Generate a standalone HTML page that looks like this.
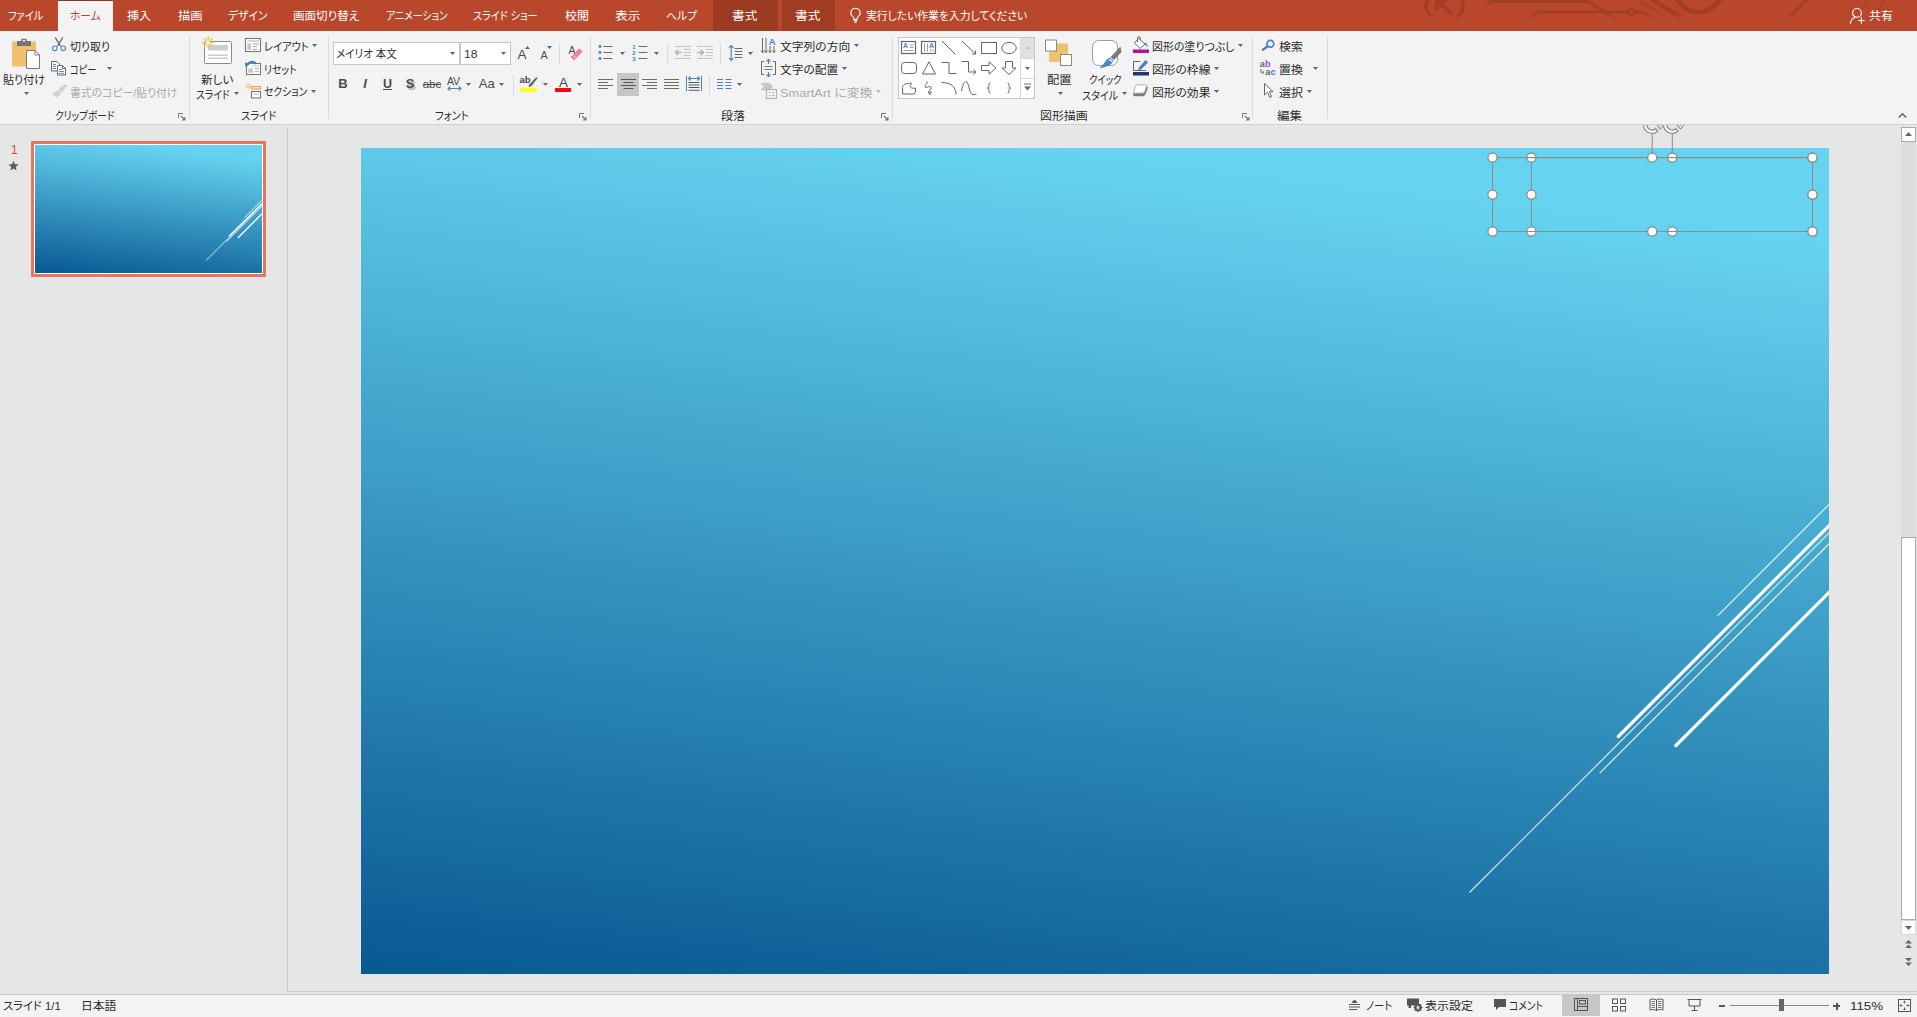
<!DOCTYPE html>
<html lang="ja"><head><meta charset="utf-8"><title>PowerPoint</title>
<style>
*{box-sizing:border-box;margin:0;padding:0}
html,body{width:1917px;height:1017px;overflow:hidden;background:#e6e6e6}
body{font-family:"Liberation Sans","Noto Sans CJK JP",sans-serif;font-size:12px;color:#2b2b2b;position:relative}
.abs{position:absolute;display:block}
svg{overflow:visible}
.t{position:absolute;white-space:pre;height:16px;line-height:16px;transform-origin:0 50%;font-feature-settings:"palt";font-kerning:normal}
.lt{position:absolute;height:18px;line-height:18px;text-align:center;white-space:pre;font-family:"Liberation Sans",sans-serif}
#tabbar{position:absolute;left:0;top:0;width:1917px;height:31px;background:#b8472b}
#ribbon{position:absolute;left:0;top:31px;width:1917px;height:94px;background:#f3f3f3;border-bottom:1px solid #d2d2d2}
#canvas{position:absolute;left:0;top:125px;width:1917px;height:869px;background:#e6e6e6}
#status{position:absolute;left:0;top:994px;width:1917px;height:23px;background:#f3f3f3;border-top:1px solid #c8c8c8}
</style></head><body>
<div id="canvas"></div>
<div class="abs" style="left:287px;top:127px;width:1px;height:865px;background:#c9c9c9"></div>
<div class="abs" style="left:288px;top:991px;width:1629px;height:1px;background:#c9c9c9"></div>
<div class="abs" style="left:31px;top:141px;width:235px;height:136px;background:#e8745a"></div>
<div class="abs" style="left:34px;top:144px;width:229px;height:130px;background:#fff"></div>
<div class="abs" style="left:35px;top:145px;width:227px;height:128px;background:linear-gradient(186.8deg,#66d4f0 0%,#66d4f0 9%,#085992 100%)"></div>
<svg class="abs" style="left:35px;top:145px" width="227" height="128" viewBox="0 0 227 128" ><path d="M209.8 72.3L227.0 55.1" stroke="#fff" stroke-opacity="0.9" stroke-width="0.90" stroke-linecap="round"/><path d="M194.4 91.0L227.0 58.4" stroke="#fff" stroke-opacity="0.95" stroke-width="1.44" stroke-linecap="round"/><path d="M171.5 115.0L227.0 59.5" stroke="#fff" stroke-opacity="0.9" stroke-width="0.90" stroke-linecap="round"/><path d="M191.6 96.6L227.0 61.2" stroke="#fff" stroke-opacity="0.9" stroke-width="0.90" stroke-linecap="round"/><path d="M203.3 92.4L227.0 68.7" stroke="#fff" stroke-opacity="0.95" stroke-width="1.44" stroke-linecap="round"/></svg>
<span class="t" id="t0" style="left:11.0px;top:141.9px;font-size:13px;color:#d04a2a;transform:scaleX(0.8985);">1</span>
<svg class="abs" style="left:8px;top:160px" width="11" height="11" viewBox="0 0 11 11" ><path d="M5.500 .8L6.900 4.300L10.600 4.500L7.700 6.900L8.700 10.500L5.500 8.500L2.300 10.500L3.300 6.900L.4 4.500L4.100 4.300Z" fill="#5a5a5a"/></svg>
<div id="slide" class="abs" style="left:361px;top:148px;width:1468px;height:826px;background:linear-gradient(186.8deg,#66d4f0 0%,#66d4f0 9%,#085992 100%)"></div>
<svg class="abs" style="left:361px;top:148px;overflow:hidden" width="1468" height="826" viewBox="0 0 1468 826" ><path d="M1357.0 467.4L1470.0 354.4" stroke="#fff" stroke-opacity="0.85" stroke-width="1.2" stroke-linecap="round"/><path d="M1257.3 588.5L1470.0 375.8" stroke="#fff" stroke-opacity="1" stroke-width="3.2" stroke-linecap="round"/><path d="M1109.0 744.0L1470.0 383.0" stroke="#fff" stroke-opacity="0.85" stroke-width="1.2" stroke-linecap="round"/><path d="M1239.0 624.8L1470.0 393.8" stroke="#fff" stroke-opacity="0.85" stroke-width="1.2" stroke-linecap="round"/><path d="M1314.9 597.5L1470.0 442.4" stroke="#fff" stroke-opacity="1" stroke-width="3.2" stroke-linecap="round"/></svg>
<svg class="abs" style="left:0;top:120px" width="1917" height="130" viewBox="0 120 1917 130"><g fill="none" stroke="#8c8c8c" stroke-width="1"><rect x="1531.4" y="157.6" width="281.0999999999999" height="73.9"/><path d="M1672.3 157.6V133"/></g><circle cx="1531.4" cy="157.6" r="4.600" fill="#fff" stroke="#8c8c8c" stroke-width="1.300"/><circle cx="1531.4" cy="194.6" r="4.600" fill="#fff" stroke="#8c8c8c" stroke-width="1.300"/><circle cx="1531.4" cy="231.5" r="4.600" fill="#fff" stroke="#8c8c8c" stroke-width="1.300"/><circle cx="1672.3" cy="157.6" r="4.600" fill="#fff" stroke="#8c8c8c" stroke-width="1.300"/><circle cx="1672.3" cy="231.5" r="4.600" fill="#fff" stroke="#8c8c8c" stroke-width="1.300"/><circle cx="1812.5" cy="157.6" r="4.600" fill="#fff" stroke="#8c8c8c" stroke-width="1.300"/><circle cx="1812.5" cy="194.6" r="4.600" fill="#fff" stroke="#8c8c8c" stroke-width="1.300"/><circle cx="1812.5" cy="231.5" r="4.600" fill="#fff" stroke="#8c8c8c" stroke-width="1.300"/><g fill="none" stroke="#8c8c8c" stroke-width="1"><rect x="1492.5" y="157.6" width="320.0" height="73.9"/><path d="M1652.2 157.6V133"/></g><path d="M1527.4 157.6H1535.4" stroke="#8c8c8c" stroke-width="1"/><path d="M1527.4 231.5H1535.4" stroke="#8c8c8c" stroke-width="1"/><path d="M1668.3 157.6H1676.3" stroke="#8c8c8c" stroke-width="1"/><path d="M1668.3 231.5H1676.3" stroke="#8c8c8c" stroke-width="1"/><circle cx="1492.5" cy="157.6" r="4.600" fill="#fff" stroke="#8c8c8c" stroke-width="1.300"/><circle cx="1492.5" cy="194.6" r="4.600" fill="#fff" stroke="#8c8c8c" stroke-width="1.300"/><circle cx="1492.5" cy="231.5" r="4.600" fill="#fff" stroke="#8c8c8c" stroke-width="1.300"/><circle cx="1652.2" cy="157.6" r="4.600" fill="#fff" stroke="#8c8c8c" stroke-width="1.300"/><circle cx="1652.2" cy="231.5" r="4.600" fill="#fff" stroke="#8c8c8c" stroke-width="1.300"/><circle cx="1812.5" cy="157.6" r="4.600" fill="#fff" stroke="#8c8c8c" stroke-width="1.300"/><circle cx="1812.5" cy="194.6" r="4.600" fill="#fff" stroke="#8c8c8c" stroke-width="1.300"/><circle cx="1812.5" cy="231.5" r="4.600" fill="#fff" stroke="#8c8c8c" stroke-width="1.300"/><path d="M1643.40 121V124.5A8.8 8.8 0 0 0 1657.86 131.24L1655.74 128.71A5.5 5.5 0 0 1 1646.70 124.5V121Z" fill="#fff" stroke="#8c8c8c" stroke-width="1.200"/><path d="M1656.40 121V124.300L1660.40 128.800L1664.40 124.300V121L1660.40 125.500Z" fill="#fff" stroke="#8c8c8c" stroke-width="1.100"/><path d="M1663.50 121V124.5A8.8 8.8 0 0 0 1677.96 131.24L1675.84 128.71A5.5 5.5 0 0 1 1666.80 124.5V121Z" fill="#fff" stroke="#8c8c8c" stroke-width="1.200"/><path d="M1676.50 121V124.300L1680.50 128.800L1684.50 124.300V121L1680.50 125.500Z" fill="#fff" stroke="#8c8c8c" stroke-width="1.100"/></svg>
<div class="abs" style="left:1901px;top:127px;width:15px;height:808px;background:#dcdcdc"></div>
<div class="abs" style="left:1901px;top:127px;width:15px;height:15px;background:#fff;border:1px solid #ababab"></div>
<svg class="abs" style="left:1905px;top:132px" width="7" height="4" viewBox="0 0 7 4" ><path d="M0 4L3.500 0L7 4Z" fill="#666"/></svg>
<div class="abs" style="left:1901px;top:537px;width:15px;height:383px;background:#fff;border:1px solid #ababab"></div>
<div class="abs" style="left:1901px;top:920px;width:15px;height:15px;background:#fff;border:1px solid #d6d6d6"></div>
<svg class="abs" style="left:1905px;top:926px" width="7" height="4" viewBox="0 0 7 4" ><path d="M0 0H7L3.500 4Z" fill="#666"/></svg>
<svg class="abs" style="left:1905px;top:940px" width="7" height="8" viewBox="0 0 7 8" ><path d="M0 3.500L3.500 0L7 3.500ZM0 8L3.500 4.500L7 8Z" fill="#666"/></svg>
<svg class="abs" style="left:1905px;top:958px" width="7" height="8" viewBox="0 0 7 8" ><path d="M0 0H7L3.500 3.500ZM0 4.500H7L3.500 8Z" fill="#666"/></svg>
<div id="status"></div>
<span class="t" id="t1" style="left:3.3px;top:998.2px;font-size:11.5px;color:#2b2b2b;transform:scaleX(0.9827);">スライド 1/1</span>
<span class="t" id="t2" style="left:80.5px;top:998.2px;font-size:11.5px;color:#2b2b2b;transform:scaleX(1.0261);">日本語</span>
<svg class="abs" style="left:1348px;top:999px" width="13" height="12" viewBox="0 0 13 12" ><path d="M6.500 1L9 3.500H4ZM1 5.500H12M1 8H12M1 10.500H9" fill="#555" stroke="#555" stroke-width="1"/></svg>
<span class="t" id="t3" style="left:1365.5px;top:998.2px;font-size:11.5px;color:#2b2b2b;transform:scaleX(0.8962);">ノート</span>
<svg class="abs" style="left:1406px;top:997px" width="17" height="15" viewBox="0 0 17 15" ><path d="M1 1.500H13V7H9.500V8.500H5V11H2.500V8.500H1Z" fill="#555"/><circle cx="12" cy="10.500" r="3" fill="none" stroke="#555" stroke-width="1.600"/><path d="M12 6V15M7.500 10.500H16.500M8.800 7.300L15.200 13.700M15.200 7.300L8.800 13.700" stroke="#555" stroke-width="1.100"/><circle cx="12" cy="10.500" r="1.300" fill="#f3f3f3"/></svg>
<span class="t" id="t4" style="left:1425.0px;top:998.2px;font-size:11.5px;color:#2b2b2b;transform:scaleX(1.0413);">表示設定</span>
<svg class="abs" style="left:1493px;top:998px" width="14" height="13" viewBox="0 0 14 13" ><path d="M1 1H13V9H6L3 12V9H1Z" fill="#555"/></svg>
<span class="t" id="t5" style="left:1509.2px;top:998.2px;font-size:11.5px;color:#2b2b2b;transform:scaleX(0.8515);">コメント</span>
<div class="abs" style="left:1562px;top:995px;width:38px;height:21px;background:#c6c6c6"></div>
<svg class="abs" style="left:1574px;top:998px" width="15" height="14" viewBox="0 0 15 14" ><rect x=".5" y=".5" width="13" height="12" fill="none" stroke="#555"/><path d="M3.500 .5V12.500M3.500 8.500H13.500" stroke="#555"/><rect x="5.500" y="2.500" width="6" height="3.500" fill="none" stroke="#555"/></svg>
<svg class="abs" style="left:1612px;top:998px" width="15" height="14" viewBox="0 0 15 14" ><g fill="none" stroke="#555"><rect x=".5" y="1" width="5" height="4.500"/><rect x="8.500" y="1" width="5" height="4.500"/><rect x=".5" y="8.500" width="5" height="4.500"/><rect x="8.500" y="8.500" width="5" height="4.500"/></g></svg>
<svg class="abs" style="left:1649px;top:998px" width="15" height="14" viewBox="0 0 15 14" ><path d="M7.500 2V13M7.500 2C5.500 .8 3 .8 1 1.500V12C3 11.300 5.500 11.300 7.500 12.500C9.500 11.300 12 11.300 14 12V1.500C12 .8 9.500 .8 7.500 2Z" fill="none" stroke="#555"/><path d="M2.500 3.500H6M2.500 5.500H6M2.500 7.500H6M2.500 9.500H6M9 3.500H12.500M9 5.500H12.500M9 7.500H12.500M9 9.500H12.500" stroke="#555" stroke-width=".8"/></svg>
<svg class="abs" style="left:1687px;top:998px" width="15" height="14" viewBox="0 0 15 14" ><path d="M.5 1.500H14.500M2 1.500V8H13V1.500M7.500 8V12M4.500 12.500H10.500" fill="none" stroke="#555"/></svg>
<div class="abs" style="left:1719px;top:1005px;width:6px;height:2px;background:#555"></div>
<div class="abs" style="left:1730px;top:1005px;width:99px;height:1px;background:#8a8a8a"></div>
<div class="abs" style="left:1779px;top:999px;width:5px;height:12px;background:#666"></div>
<div class="abs" style="left:1833px;top:1005px;width:7px;height:2px;background:#555"></div>
<div class="abs" style="left:1835.500px;top:1002.500px;width:2px;height:7px;background:#555"></div>
<span class="t" id="t6" style="left:1850.0px;top:998.2px;font-size:11.5px;color:#2b2b2b;transform:scaleX(1.1589);">115%</span>
<svg class="abs" style="left:1898px;top:999px" width="13" height="13" viewBox="0 0 13 13" ><rect x=".5" y=".5" width="12" height="12" fill="none" stroke="#555"/><path d="M6.500 2V4.500M6.500 11V8.500M2 6.500H4.500M11 6.500H8.500M5.300 3.200L6.500 2L7.700 3.200M5.300 9.800L6.500 11L7.700 9.800M3.200 5.300L2 6.500L3.200 7.700M9.800 5.300L11 6.500L9.800 7.700" fill="none" stroke="#555" stroke-width=".9"/></svg>
<div id="ribbon"></div>
<svg class="abs" style="left:11px;top:37px" width="30" height="33" viewBox="0 0 30 33" >
<rect x="1" y="4.5" width="24" height="25" fill="#efc16f"/>
<path d="M6 4h4.2v-1.2a1 1 0 0 1 1-1h3.600a1 1 0 0 1 1 1V4H20v5H6z" fill="#737373"/>
<rect x="11.6" y="2.9" width="2.8" height="1.6" fill="#f3f3f3"/>
<path d="M15.5 13.5h8.500l4.500 4.500v13.500h-13z" fill="#fff" stroke="#7a7a7a" stroke-width="1"/>
<path d="M24 13.500v4.500h4.500" fill="none" stroke="#7a7a7a" stroke-width="1"/></svg>
<span class="t" id="t22" style="left:2.5px;top:72.4px;font-size:11.5px;color:#2b2b2b;transform:scaleX(0.9590);">貼り付け</span>
<svg class="abs" style="left:24.0px;top:92.0px" width="5" height="3" viewBox="0 0 5 3"><path d="M0 0H5L2.5 3Z" fill="#666"/></svg>
<svg class="abs" style="left:51px;top:37px" width="16" height="15" viewBox="0 0 16 15" >
<path d="M4.200 .5L9.600 9.200M11.800 .5L6.400 9.200" stroke="#6b6b6b" stroke-width="1.4" fill="none"/>
<circle cx="3.800" cy="11.300" r="2.300" fill="none" stroke="#4a86d0" stroke-width="1.1"/>
<circle cx="12.200" cy="11.300" r="2.300" fill="none" stroke="#4a86d0" stroke-width="1.1"/></svg>
<span class="t" id="t23" style="left:69.9px;top:39.2px;font-size:11.5px;color:#2b2b2b;transform:scaleX(0.9516);">切り取り</span>
<svg class="abs" style="left:50px;top:60px" width="17" height="16" viewBox="0 0 17 16" >
<path d="M1.500 1.500h5.500l2.500 2.500v7h-8z" fill="#fff" stroke="#6b6b6b"/>
<path d="M3 4.500h3M3 6.500h3M3 8.500h3" stroke="#4a80bd" stroke-width=".9"/>
<path d="M7.500 5.500h5l3 3v6.500h-8z" fill="#fff" stroke="#6b6b6b"/>
<path d="M12.500 5.500v3h3" fill="none" stroke="#6b6b6b"/>
<path d="M9 9.500h3M9 11.500h5M9 13.300h5" stroke="#4a80bd" stroke-width=".9"/></svg>
<span class="t" id="t24" style="left:69.9px;top:61.5px;font-size:11.5px;color:#2b2b2b;transform:scaleX(0.7947);">コピー</span>
<svg class="abs" style="left:106.9px;top:66.8px" width="5" height="3" viewBox="0 0 5 3"><path d="M0 0H5L2.5 3Z" fill="#666"/></svg>
<svg class="abs" style="left:52px;top:84px" width="16" height="14" viewBox="0 0 16 14" >
<path d="M10.500 1.500l3 3-4.500 4.500-3-3z" fill="#d0d0d0"/>
<path d="M13 .5l2 2-1.300 1.300-2-2z" fill="#c4c4c4"/>
<path d="M5.500 6.500l3.500 3.500-4.500 3.500-4-3.500z" fill="#cfcfcf"/></svg>
<span class="t" id="t25" style="left:69.9px;top:85.0px;font-size:11.5px;color:#ababab;transform:scaleX(0.9427);">書式のコピー/貼り付け</span>
<span class="t" id="t26" style="left:55.0px;top:108.1px;font-size:11.5px;color:#2b2b2b;transform:scaleX(0.8390);">クリップボード</span>
<svg class="abs" style="left:178px;top:113px" width="8" height="8" viewBox="0 0 8 8" ><path d="M.5 5V.5H5" fill="none" stroke="#777" stroke-width="1"/><path d="M3 3L6 6" fill="none" stroke="#777" stroke-width="1.200"/><path d="M7.500 3.500V7.500H3.500Z" fill="#777"/></svg>
<div class="abs" style="left:189px;top:36px;width:1px;height:83px;background:#dcdcdc"></div>
<svg class="abs" style="left:200px;top:35px" width="34" height="30" viewBox="0 0 34 30" >
<rect x="4.500" y="6.500" width="27" height="22" rx="1" fill="#fff" stroke="#8c8c8c"/>
<rect x="8" y="10" width="20" height="5.500" fill="#cfcfcf"/>
<path d="M8 20.200h20M8 23.200h20" stroke="#b5b5b5" stroke-width="1"/>
<g stroke="#e6c45c" stroke-width="1.500"><path d="M8.200 1.500v12M2.200 7.500h12M4 3.300l8.400 8.400M12.400 3.300L4 11.700"/></g>
<circle cx="8.200" cy="7.500" r="2.200" fill="#fbf0c8"/></svg>
<span class="t" id="t27" style="left:201.2px;top:72.3px;font-size:11.5px;color:#2b2b2b;transform:scaleX(1.0069);">新しい</span>
<span class="t" id="t28" style="left:195.5px;top:86.9px;font-size:11.5px;color:#2b2b2b;transform:scaleX(0.8550);">スライド</span>
<svg class="abs" style="left:234.2px;top:92.2px" width="5" height="3" viewBox="0 0 5 3"><path d="M0 0H5L2.5 3Z" fill="#666"/></svg>
<svg class="abs" style="left:244px;top:37px" width="18" height="16" viewBox="0 0 18 16" >
<rect x="1.500" y="1.500" width="15" height="13" fill="#fff" stroke="#7a7a7a" stroke-width="1.100"/>
<rect x="3.300" y="3.100" width="11.700" height="1.700" fill="#d2d2d2"/>
<rect x="3.300" y="6.400" width="3.800" height="6.500" fill="#c8c8c8"/>
<path d="M9 6.900H15M9 9.600H13M9 12.500H13" stroke="#9a9a9a" stroke-width=".9"/></svg>
<span class="t" id="t29" style="left:263.8px;top:38.8px;font-size:11.5px;color:#2b2b2b;transform:scaleX(0.8907);">レイアウト</span>
<svg class="abs" style="left:312.2px;top:43.9px" width="5" height="3" viewBox="0 0 5 3"><path d="M0 0H5L2.5 3Z" fill="#666"/></svg>
<svg class="abs" style="left:244px;top:60px" width="18" height="16" viewBox="0 0 18 16" >
<rect x="2.500" y="3.500" width="14" height="11" fill="#fff" stroke="#7a7a7a" stroke-width="1.100"/>
<rect x="7.500" y="5.400" width="7.500" height="1.400" fill="#d8d8d8"/>
<rect x="4.300" y="8.500" width="4.500" height="4.200" fill="#c4c4c4"/>
<path d="M10.500 8.700H15M10.500 11.400H15" stroke="#a5a5a5" stroke-width=".9"/>
<path d="M12 4.200C11 1.400 6.500 .6 3 4.600" fill="none" stroke="#3e7fc1" stroke-width="2"/>
<path d="M.8 2.300L5.600 4.300L1.600 7.300Z" fill="#3e7fc1"/></svg>
<span class="t" id="t30" style="left:263.8px;top:61.8px;font-size:11.5px;color:#2b2b2b;transform:scaleX(0.8542);">リセット</span>
<svg class="abs" style="left:244px;top:82px" width="18" height="17" viewBox="0 0 18 17" >
<g stroke="#f2b25a" stroke-width=".9"><path d="M4.300 1.300v6M1.300 4.300h6M2.200 2.200l4.200 4.200M6.400 2.200l-4.200 4.200"/></g>
<circle cx="4.300" cy="4.300" r="1.100" fill="#fdeccc"/>
<rect x="7.500" y="4.500" width="9" height="2.500" fill="#fde6c4" stroke="#eba24a"/>
<rect x="7.500" y="9.500" width="9" height="6.500" fill="#fff" stroke="#7a7a7a" stroke-width="1.100"/>
<rect x="9.300" y="11.500" width="5.500" height="1.500" fill="#c9c9c9"/></svg>
<span class="t" id="t31" style="left:263.8px;top:84.4px;font-size:11.5px;color:#2b2b2b;transform:scaleX(0.8565);">セクション</span>
<svg class="abs" style="left:311.2px;top:89.9px" width="5" height="3" viewBox="0 0 5 3"><path d="M0 0H5L2.5 3Z" fill="#666"/></svg>
<span class="t" id="t32" style="left:241.3px;top:108.1px;font-size:11.5px;color:#2b2b2b;transform:scaleX(0.8904);">スライド</span>
<div class="abs" style="left:328px;top:36px;width:1px;height:83px;background:#dcdcdc"></div>
<div class="abs" style="left:333px;top:42px;width:127px;height:23px;background:#fff;border:1px solid #c6c6c6"></div>
<div class="abs" style="left:460px;top:42px;width:51px;height:23px;background:#fff;border:1px solid #c6c6c6"></div>
<span class="t" id="t33" style="left:336.1px;top:46.4px;font-size:11.5px;color:#333;transform:scaleX(0.9173);">メイリオ 本文</span>
<svg class="abs" style="left:449.9px;top:52.1px" width="5" height="3" viewBox="0 0 5 3"><path d="M0 0H5L2.5 3Z" fill="#666"/></svg>
<span class="t" id="t34" style="left:463.7px;top:46.4px;font-size:11.5px;color:#333;transform:scaleX(1.0549);">18</span>
<svg class="abs" style="left:500.9px;top:52.1px" width="5" height="3" viewBox="0 0 5 3"><path d="M0 0H5L2.5 3Z" fill="#666"/></svg>
<span class="lt" style="left:507px;top:45.7px;width:30px;font-size:13.5px;color:#4a4a4a;">A</span>
<svg class="abs" style="left:525px;top:46px" width="5" height="3" viewBox="0 0 5 3" ><path d="M0 3L2.500 0L5 3Z" fill="#4a6a94"/></svg>
<span class="lt" style="left:529px;top:45.95px;width:30px;font-size:10.8px;color:#4a4a4a;">A</span>
<svg class="abs" style="left:547px;top:46px" width="5" height="3" viewBox="0 0 5 3" ><path d="M0 0H5L2.500 3Z" fill="#4a6a94"/></svg>
<div class="abs" style="left:559px;top:43px;width:1px;height:21px;background:#dcdcdc"></div>
<span class="lt" style="left:557px;top:40.75px;width:30px;font-size:10.5px;color:#4a4a4a;">A</span>
<svg class="abs" style="left:570px;top:47px" width="14" height="14" viewBox="0 0 14 14" ><path d="M9.200 1.200L12.700 4.500L6.200 11.200L2.600 7.800Z" fill="#f0819b"/><path d="M2.200 8.300L5.800 11.700L4.300 13.200L.5 9.800Z" fill="#e8728e"/></svg>
<span class="lt" style="left:328px;top:75px;width:30px;font-size:13px;color:#4a4a4a;font-weight:bold">B</span>
<span class="lt" style="left:350px;top:75px;width:30px;font-size:13px;color:#4a4a4a;font-style:italic;font-weight:bold">I</span>
<span class="lt" style="left:372.5px;top:74.7px;width:30px;font-size:12.5px;color:#4a4a4a;text-decoration:underline;font-weight:bold">U</span>
<span class="lt" style="left:395px;top:75px;width:30px;font-size:13px;color:#4a4a4a;font-weight:bold;text-shadow:1.500px 1.500px 1px #aaa">S</span>
<span class="lt" style="left:417px;top:74.5px;width:30px;font-size:11.5px;color:#4a4a4a;text-decoration:line-through">abc</span>
<span class="lt" style="left:438.5px;top:72.2px;width:30px;font-size:10.5px;color:#4a4a4a;">AV</span>
<svg class="abs" style="left:447px;top:86px" width="15" height="5" viewBox="0 0 15 5" ><path d="M1 2.500H14M3.300 .3L1 2.500L3.300 4.700M11.700 .3L14 2.500L11.700 4.700" fill="none" stroke="#4a80bd" stroke-width="1.100"/></svg>
<svg class="abs" style="left:466.0px;top:82.8px" width="5" height="3" viewBox="0 0 5 3"><path d="M0 0H5L2.5 3Z" fill="#666"/></svg>
<span class="lt" style="left:471.7px;top:75.1px;width:30px;font-size:13px;color:#4a4a4a;">Aa</span>
<svg class="abs" style="left:499.1px;top:82.8px" width="5" height="3" viewBox="0 0 5 3"><path d="M0 0H5L2.5 3Z" fill="#666"/></svg>
<div class="abs" style="left:513px;top:75px;width:1px;height:20px;background:#dcdcdc"></div>
<span class="lt" style="left:510px;top:71.3px;width:30px;font-size:9.5px;color:#4a4a4a;font-weight:bold">ab</span>
<svg class="abs" style="left:526px;top:77px" width="12" height="10" viewBox="0 0 12 10" ><path d="M10.800 .8L4.500 7.500L3 9.200L5 8.200Z" stroke="#666" stroke-width="1.800" fill="none"/></svg>
<div class="abs" style="left:520px;top:88px;width:17px;height:4px;background:#fdfd1e"></div>
<svg class="abs" style="left:543.0px;top:82.8px" width="5" height="3" viewBox="0 0 5 3"><path d="M0 0H5L2.5 3Z" fill="#666"/></svg>
<span class="lt" style="left:548.6px;top:74.2px;width:30px;font-size:13.5px;color:#4a4a4a;">A</span>
<div class="abs" style="left:555px;top:88px;width:16px;height:4px;background:#f20d0d"></div>
<svg class="abs" style="left:577.0px;top:82.8px" width="5" height="3" viewBox="0 0 5 3"><path d="M0 0H5L2.5 3Z" fill="#666"/></svg>
<span class="t" id="t35" style="left:434.7px;top:108.1px;font-size:11.5px;color:#2b2b2b;transform:scaleX(0.8976);">フォント</span>
<svg class="abs" style="left:579px;top:113px" width="8" height="8" viewBox="0 0 8 8" ><path d="M.5 5V.5H5" fill="none" stroke="#777" stroke-width="1"/><path d="M3 3L6 6" fill="none" stroke="#777" stroke-width="1.200"/><path d="M7.500 3.500V7.500H3.500Z" fill="#777"/></svg>
<div class="abs" style="left:590px;top:36px;width:1px;height:83px;background:#dcdcdc"></div>
<svg class="abs" style="left:598px;top:44px" width="16" height="17" viewBox="0 0 16 17" >
<g fill="#4a80bd"><circle cx="2" cy="2.500" r="1.400"/><circle cx="2" cy="8.500" r="1.400"/><circle cx="2" cy="14.500" r="1.400"/></g>
<path d="M5.500 2.500H14.500M5.500 8.500H14.500M5.500 14.500H14.500" stroke="#6b6b6b" stroke-width="1"/></svg>
<svg class="abs" style="left:620.0px;top:51.9px" width="5" height="3" viewBox="0 0 5 3"><path d="M0 0H5L2.5 3Z" fill="#666"/></svg>
<svg class="abs" style="left:632px;top:44px" width="17" height="17" viewBox="0 0 17 17" >
<g fill="#4a80bd" font-family="Liberation Sans,sans-serif" font-size="6" font-weight="bold"><text x=".3" y="4.700">1</text><text x=".3" y="10.700">2</text><text x=".3" y="16.700">3</text></g>
<path d="M6.500 2.500H15.500M6.500 8.500H15.500M6.500 14.500H15.500" stroke="#6b6b6b" stroke-width="1"/></svg>
<svg class="abs" style="left:654.0px;top:51.9px" width="5" height="3" viewBox="0 0 5 3"><path d="M0 0H5L2.5 3Z" fill="#666"/></svg>
<div class="abs" style="left:667px;top:43px;width:1px;height:21px;background:#dcdcdc"></div>
<svg class="abs" style="left:674px;top:45px" width="18" height="15" viewBox="0 0 18 15" >
<path d="M1 1.500H17M9.500 4.500H17M9.500 7.500H17M9.500 10.500H17M1 13.500H17" stroke="#c4c4c4" stroke-width="1"/>
<path d="M7.500 7.500H2M4.300 4.800L1.600 7.500L4.300 10.200" fill="none" stroke="#b2b2b2" stroke-width="1.600"/></svg>
<svg class="abs" style="left:696px;top:45px" width="18" height="15" viewBox="0 0 18 15" >
<path d="M1 1.500H17M9.500 4.500H17M9.500 7.500H17M9.500 10.500H17M1 13.500H17" stroke="#c4c4c4" stroke-width="1"/>
<path d="M1.500 7.500H7M4.700 4.800L7.400 7.500L4.700 10.200" fill="none" stroke="#b2b2b2" stroke-width="1.600"/></svg>
<div class="abs" style="left:720px;top:43px;width:1px;height:21px;background:#dcdcdc"></div>
<svg class="abs" style="left:727px;top:44px" width="18" height="18" viewBox="0 0 18 18" >
<path d="M4.200 1.500V16.500M2 3.900L4.200 1.600L6.400 3.900M2 14.100L4.200 16.400L6.400 14.100" fill="none" stroke="#4a80bd" stroke-width="1.100"/>
<path d="M7.700 4.500H15.300M7.700 7.500H15.300M7.700 10.500H15.300M7.700 13.500H15.300" stroke="#6b6b6b" stroke-width="1"/></svg>
<svg class="abs" style="left:748.1px;top:51.9px" width="5" height="3" viewBox="0 0 5 3"><path d="M0 0H5L2.5 3Z" fill="#666"/></svg>
<svg class="abs" style="left:598px;top:78px" width="16" height="12" viewBox="0 0 16 12" ><path d="M0 1.5H15" stroke="#6b6b6b" stroke-width="1"/><path d="M0 4.5H10" stroke="#6b6b6b" stroke-width="1"/><path d="M0 7.5H15" stroke="#6b6b6b" stroke-width="1"/><path d="M0 10.5H10" stroke="#6b6b6b" stroke-width="1"/></svg>
<div class="abs" style="left:617px;top:73px;width:22px;height:23px;background:#c6c6c6"></div>
<svg class="abs" style="left:621px;top:78px" width="16" height="12" viewBox="0 0 16 12" ><path d="M0 1.5H15" stroke="#555" stroke-width="1"/><path d="M2.5 4.5H12.5" stroke="#555" stroke-width="1"/><path d="M0 7.5H15" stroke="#555" stroke-width="1"/><path d="M2.5 10.5H12.5" stroke="#555" stroke-width="1"/></svg>
<svg class="abs" style="left:642px;top:78px" width="16" height="12" viewBox="0 0 16 12" ><path d="M0 1.5H15" stroke="#6b6b6b" stroke-width="1"/><path d="M5 4.5H15" stroke="#6b6b6b" stroke-width="1"/><path d="M0 7.5H15" stroke="#6b6b6b" stroke-width="1"/><path d="M5 10.5H15" stroke="#6b6b6b" stroke-width="1"/></svg>
<svg class="abs" style="left:664px;top:78px" width="16" height="12" viewBox="0 0 16 12" ><path d="M0 1.5H15" stroke="#6b6b6b" stroke-width="1"/><path d="M0 4.5H15" stroke="#6b6b6b" stroke-width="1"/><path d="M0 7.5H15" stroke="#6b6b6b" stroke-width="1"/><path d="M0 10.5H15" stroke="#6b6b6b" stroke-width="1"/></svg>
<svg class="abs" style="left:685px;top:75px" width="18" height="17" viewBox="0 0 18 17" >
<path d="M1.500 1V16M16.500 1V16" stroke="#4a80bd" stroke-width="1"/>
<path d="M3.500 3.500H14.500M5.500 1.500L3.500 3.500L5.500 5.500M12.500 1.500L14.500 3.500L12.500 5.500" fill="none" stroke="#4a80bd" stroke-width="1.100"/>
<path d="M3.500 7.500H14.500M3.500 10H14.500M3.500 12.500H14.500M3.500 15.300H14.500" stroke="#555" stroke-width="1.100"/></svg>
<div class="abs" style="left:709px;top:75px;width:1px;height:20px;background:#dcdcdc"></div>
<svg class="abs" style="left:717px;top:78px" width="15" height="12" viewBox="0 0 15 12" ><path d="M0 1.500H6M0 4.500H6M0 7.500H6M0 10.500H6M8.500 1.500H14.500M8.500 4.500H14.500M8.500 7.500H14.500M8.500 10.500H14.500" stroke="#4a80bd" stroke-width="1"/></svg>
<svg class="abs" style="left:736.9px;top:82.8px" width="5" height="3" viewBox="0 0 5 3"><path d="M0 0H5L2.5 3Z" fill="#666"/></svg>
<svg class="abs" style="left:760px;top:37px" width="18" height="17" viewBox="0 0 18 17" >
<path d="M2.500 1V15.500M6 1V15.500M10 9V15.500M14 9V15.500" stroke="#6b6b6b" stroke-width="1"/>
<path d="M1 13.500L2.500 15.800L4 13.500M4.500 13.500L6 15.800L7.500 13.500M8.500 13.500L10 15.800L11.500 13.500M12.500 13.500L14 15.800L15.500 13.500" fill="none" stroke="#6b6b6b" stroke-width=".9"/>
<text x="8.700" y="7.500" font-family="Liberation Sans,sans-serif" font-size="9.500" font-weight="bold" fill="#4a80bd">A</text></svg>
<span class="t" id="t36" style="left:779.6px;top:38.9px;font-size:11.5px;color:#2b2b2b;transform:scaleX(1.0234);">文字列の方向</span>
<svg class="abs" style="left:853.8px;top:43.9px" width="5" height="3" viewBox="0 0 5 3"><path d="M0 0H5L2.5 3Z" fill="#666"/></svg>
<svg class="abs" style="left:760px;top:59px" width="18" height="18" viewBox="0 0 18 18" >
<path d="M4 2.500H1.500V15.500H4M13 2.500H15.500V15.500H13" fill="none" stroke="#6b6b6b" stroke-width="1"/>
<path d="M8.500 .5V5M6.500 2.500L8.500 .5L10.500 2.500M8.500 17.500V13M6.500 15.500L8.500 17.500L10.500 15.500" fill="none" stroke="#4a80bd" stroke-width="1.100"/>
<path d="M4.500 7.500H12.500M4.500 10.500H12.500" stroke="#6b6b6b" stroke-width=".9"/></svg>
<span class="t" id="t37" style="left:779.6px;top:61.9px;font-size:11.5px;color:#2b2b2b;transform:scaleX(1.0211);">文字の配置</span>
<svg class="abs" style="left:841.9px;top:66.9px" width="5" height="3" viewBox="0 0 5 3"><path d="M0 0H5L2.5 3Z" fill="#666"/></svg>
<svg class="abs" style="left:760px;top:82px" width="18" height="18" viewBox="0 0 18 18" >
<path d="M.5 .8H9.500L13 4.500L9.500 8.200H.5L3.500 4.500Z" fill="#c6c6c6"/>
<rect x="6.500" y="7.500" width="10" height="9" fill="#f3f3f3" stroke="#b4b4b4" stroke-width="1.200"/>
<path d="M9 10.500H10.500M12 10.500H14.500M9 13.500H10.500M12 13.500H14.500" stroke="#b4b4b4"/></svg>
<span class="t" id="t38" style="left:779.6px;top:84.9px;font-size:11.5px;color:#ababab;transform:scaleX(1.1193);">SmartArt に変換</span>
<svg class="abs" style="left:875.9px;top:89.9px" width="5" height="3" viewBox="0 0 5 3"><path d="M0 0H5L2.5 3Z" fill="#b5b5b5"/></svg>
<span class="t" id="t39" style="left:720.8px;top:108.1px;font-size:11.5px;color:#2b2b2b;transform:scaleX(1.0435);">段落</span>
<svg class="abs" style="left:881px;top:113px" width="8" height="8" viewBox="0 0 8 8" ><path d="M.5 5V.5H5" fill="none" stroke="#777" stroke-width="1"/><path d="M3 3L6 6" fill="none" stroke="#777" stroke-width="1.200"/><path d="M7.500 3.500V7.500H3.500Z" fill="#777"/></svg>
<div class="abs" style="left:892px;top:36px;width:1px;height:83px;background:#dcdcdc"></div>
<div class="abs" style="left:898px;top:37px;width:137px;height:62px;background:#fff;border:1px solid #c6c6c6"></div>
<div class="abs" style="left:1021px;top:38px;width:13px;height:20px;background:#e1e1e1"></div>
<div class="abs" style="left:1020px;top:38px;width:1px;height:60px;background:#d9d9d9"></div>
<div class="abs" style="left:1021px;top:58px;width:13px;height:1px;background:#d9d9d9"></div>
<div class="abs" style="left:1021px;top:78px;width:13px;height:1px;background:#d9d9d9"></div>
<svg class="abs" style="left:1025px;top:46px" width="5" height="3" viewBox="0 0 5 3" ><path d="M0 3L2.500 0L5 3Z" fill="#c3c3c3"/></svg>
<svg class="abs" style="left:1025.0px;top:66.8px" width="5" height="3" viewBox="0 0 5 3"><path d="M0 0H5L2.5 3Z" fill="#666"/></svg>
<svg class="abs" style="left:1024px;top:83px" width="7" height="8" viewBox="0 0 7 8" ><path d="M0 1H7" stroke="#666" stroke-width="1"/><path d="M0 3.500H7L3.500 7.500Z" fill="#666"/></svg>
<svg class="abs" style="left:901px;top:40px" width="16" height="14" viewBox="0 0 16 14" ><g fill="none" stroke="#666" stroke-width="1"><rect x=".5" y="1.500" width="14" height="12" fill="#fff" stroke-width="1.200"/><path d="M9 5H12.500M9 7.500H12.500M2.500 10.500H12.500" stroke="#9a9a9a"/><text x="2" y="8.300" font-family="Liberation Sans,sans-serif" font-size="7" font-weight="bold" fill="#4a80bd" stroke="none">A</text></g></svg>
<svg class="abs" style="left:921px;top:40px" width="16" height="14" viewBox="0 0 16 14" ><g fill="none" stroke="#666" stroke-width="1"><rect x=".5" y="1.500" width="14" height="12" fill="#fff" stroke-width="1.200"/><path d="M3.500 3.500V11.500M6.500 3.500V11.500M9.500 9.500V11.500M12 9.500V11.500" stroke="#9a9a9a"/><text x="8" y="8.300" font-family="Liberation Sans,sans-serif" font-size="7" font-weight="bold" fill="#4a80bd" stroke="none">A</text></g></svg>
<svg class="abs" style="left:941px;top:40px" width="16" height="14" viewBox="0 0 16 14" ><g fill="none" stroke="#666" stroke-width="1"><path d="M1 1L14.500 14.500"/></g></svg>
<svg class="abs" style="left:961px;top:40px" width="16" height="14" viewBox="0 0 16 14" ><g fill="none" stroke="#666" stroke-width="1"><path d="M1 1L14.500 14M14.500 10.500V14H11"/></g></svg>
<svg class="abs" style="left:981px;top:40px" width="16" height="14" viewBox="0 0 16 14" ><g fill="none" stroke="#666" stroke-width="1"><rect x=".5" y="2.500" width="15" height="11"/></g></svg>
<svg class="abs" style="left:1001px;top:40px" width="16" height="14" viewBox="0 0 16 14" ><g fill="none" stroke="#666" stroke-width="1"><ellipse cx="8" cy="8" rx="7.300" ry="5.600"/></g></svg>
<svg class="abs" style="left:901px;top:61px" width="16" height="14" viewBox="0 0 16 14" ><g fill="none" stroke="#666" stroke-width="1"><rect x=".5" y="1.500" width="15" height="11" rx="3"/></g></svg>
<svg class="abs" style="left:921px;top:61px" width="16" height="14" viewBox="0 0 16 14" ><g fill="none" stroke="#666" stroke-width="1"><path d="M8 .8L14.500 13H1.500Z"/></g></svg>
<svg class="abs" style="left:941px;top:61px" width="16" height="14" viewBox="0 0 16 14" ><g fill="none" stroke="#666" stroke-width="1"><path d="M.5 1.500H8V12.500H15.500"/></g></svg>
<svg class="abs" style="left:961px;top:61px" width="16" height="14" viewBox="0 0 16 14" ><g fill="none" stroke="#666" stroke-width="1"><path d="M.5 1.500H7.500V12H15M12.500 9.500L15 12L12.500 14.500" transform="translate(0,-1)"/></g></svg>
<svg class="abs" style="left:981px;top:61px" width="16" height="14" viewBox="0 0 16 14" ><g fill="none" stroke="#666" stroke-width="1"><path d="M.5 4.500H8V.8L15 7L8 13.200V9.500H.5Z"/></g></svg>
<svg class="abs" style="left:1001px;top:61px" width="16" height="14" viewBox="0 0 16 14" ><g fill="none" stroke="#666" stroke-width="1"><path d="M4.500 .5H11.500V7H15L8 13.500L1 7H4.500Z"/></g></svg>
<svg class="abs" style="left:901px;top:81px" width="16" height="14" viewBox="0 0 16 14" ><g fill="none" stroke="#666" stroke-width="1"><path d="M1.500 13V6.500C2 3.500 5 2 10.500 2.200C8.500 4.500 9 7 11.500 7.200H14.500V11.500L13 13Z"/></g></svg>
<svg class="abs" style="left:921px;top:81px" width="16" height="14" viewBox="0 0 16 14" ><g fill="none" stroke="#666" stroke-width="1"><path d="M6 .3C7 3 3 4 4 6C5 7.500 9.500 4 10 6.500C10.500 9 6.500 9.500 7.500 12C8.300 13.500 11 12.500 10.300 10.800C9.500 9.500 7.500 11.500 9.500 14"/></g></svg>
<svg class="abs" style="left:941px;top:81px" width="16" height="14" viewBox="0 0 16 14" ><g fill="none" stroke="#666" stroke-width="1"><path d="M.5 1.500C9 1.500 15 5 15 13.500"/></g></svg>
<svg class="abs" style="left:961px;top:81px" width="16" height="14" viewBox="0 0 16 14" ><g fill="none" stroke="#666" stroke-width="1"><path d="M.5 10C3 -3 6.500 -1 8 6.500C9.500 14 12 14.500 15.500 13"/></g></svg>
<svg class="abs" style="left:981px;top:81px" width="16" height="14" viewBox="0 0 16 14" ><g fill="none" stroke="#666" stroke-width="1"><path d="M9.500 2C7.500 2 8 3.300 8 4.800C8 6.300 7.500 7 6.300 7C7.500 7 8 7.700 8 9.200C8 10.700 7.500 12 9.500 12"/></g></svg>
<svg class="abs" style="left:1001px;top:81px" width="16" height="14" viewBox="0 0 16 14" ><g fill="none" stroke="#666" stroke-width="1"><path d="M6.500 2C8.500 2 8 3.300 8 4.800C8 6.300 8.500 7 9.700 7C8.500 7 8 7.700 8 9.200C8 10.700 8.500 12 6.500 12"/></g></svg>
<svg class="abs" style="left:1044px;top:39px" width="29" height="28" viewBox="0 0 29 28" >
<rect x="5" y="4.500" width="19" height="18.500" fill="#efc16f"/>
<rect x="1.500" y="1" width="11" height="11" fill="#fff" stroke="#8a8a8a"/>
<rect x="16.500" y="15.500" width="11" height="11" fill="#fff" stroke="#8a8a8a"/></svg>
<span class="t" id="t40" style="left:1046.8px;top:72.3px;font-size:11.5px;color:#2b2b2b;transform:scaleX(1.0652);">配置</span>
<svg class="abs" style="left:1057.8px;top:92.2px" width="5" height="3" viewBox="0 0 5 3"><path d="M0 0H5L2.5 3Z" fill="#666"/></svg>
<svg class="abs" style="left:1091px;top:39px" width="31" height="31" viewBox="0 0 31 31" >
<rect x="1.500" y="1.500" width="25" height="25" rx="6" fill="#fff" stroke="#9a9a9a"/>
<path d="M29.500 7.500L30.500 13L23 21L19.500 18Z" fill="#7a7a7a"/>
<path d="M19 18.500L22.500 21.500C21.500 25 17 28.500 8.500 29C13 26 14.500 20 19 18.500Z" fill="#4a86c8"/>
<path d="M18 21C19.500 20.500 21 21.500 21 23" stroke="#fff" stroke-width="1.400" fill="none"/></svg>
<span class="t" id="t41" style="left:1088.5px;top:72.3px;font-size:11.5px;color:#2b2b2b;transform:scaleX(0.8157);">クイック</span>
<span class="t" id="t42" style="left:1081.5px;top:87.9px;font-size:11.5px;color:#2b2b2b;transform:scaleX(0.8766);">スタイル</span>
<svg class="abs" style="left:1121.9px;top:92.2px" width="5" height="3" viewBox="0 0 5 3"><path d="M0 0H5L2.5 3Z" fill="#666"/></svg>
<svg class="abs" style="left:1132px;top:36px" width="18" height="17" viewBox="0 0 18 17" >
<path d="M6.500 2.500L13 8L8 12.500L2.500 7Z" fill="#fff" stroke="#6b6b6b" stroke-width="1"/>
<path d="M5.500 6V2C5.500 .3 8.500 .3 8.500 2V3.500" fill="none" stroke="#6b6b6b" stroke-width="1"/>
<path d="M13 6.500C15 7 16 9 15.500 11.500C14.500 10 14 9 13 8.500Z" fill="#4a80bd"/>
<rect x="1" y="13.500" width="16" height="3.500" fill="#b5158c"/></svg>
<span class="t" id="t43" style="left:1152.0px;top:38.9px;font-size:11.5px;color:#2b2b2b;transform:scaleX(0.9497);">図形の塗りつぶし</span>
<svg class="abs" style="left:1238.1px;top:43.9px" width="5" height="3" viewBox="0 0 5 3"><path d="M0 0H5L2.5 3Z" fill="#666"/></svg>
<svg class="abs" style="left:1132px;top:59px" width="18" height="17" viewBox="0 0 18 17" >
<path d="M8 2.500H1.500V11.500H14" fill="none" stroke="#6b6b6b" stroke-width="1"/>
<path d="M13.500 1L16 3.500L9 10.500L6 11.500L7 8.500Z" fill="#4a80bd"/>
<rect x="1" y="13" width="16" height="3.500" fill="#1f3a6e"/></svg>
<span class="t" id="t44" style="left:1152.0px;top:61.9px;font-size:11.5px;color:#2b2b2b;transform:scaleX(1.0229);">図形の枠線</span>
<svg class="abs" style="left:1213.9px;top:66.9px" width="5" height="3" viewBox="0 0 5 3"><path d="M0 0H5L2.5 3Z" fill="#666"/></svg>
<svg class="abs" style="left:1132px;top:84px" width="18" height="13" viewBox="0 0 18 13" >
<path d="M5.300 2.200H13.800C15.800 2.200 16.200 3.200 15.600 4.800L13.800 9.800C13.200 11.400 12.300 12.200 10.500 12.200H3C1.300 12.200 .8 11.200 1.400 9.500L3.300 4C3.700 2.800 4.300 2.200 5.300 2.200Z" fill="#7c7c7c"/>
<path d="M5 .8H13C14.600 .8 14.900 1.600 14.400 2.800L12.800 7.600C12.400 8.700 11.700 9.200 10.400 9.200H3C1.800 9.200 1.500 8.500 1.900 7.400L3.500 2.500C3.900 1.300 4.300 .8 5 .8Z" fill="#fbfbfb" stroke="#9a9a9a" stroke-width=".7"/></svg>
<span class="t" id="t45" style="left:1152.0px;top:85.1px;font-size:11.5px;color:#2b2b2b;transform:scaleX(1.0229);">図形の効果</span>
<svg class="abs" style="left:1213.9px;top:89.9px" width="5" height="3" viewBox="0 0 5 3"><path d="M0 0H5L2.5 3Z" fill="#666"/></svg>
<span class="t" id="t46" style="left:1040.2px;top:108.1px;font-size:11.5px;color:#2b2b2b;transform:scaleX(1.0370);">図形描画</span>
<svg class="abs" style="left:1242px;top:113px" width="8" height="8" viewBox="0 0 8 8" ><path d="M.5 5V.5H5" fill="none" stroke="#777" stroke-width="1"/><path d="M3 3L6 6" fill="none" stroke="#777" stroke-width="1.200"/><path d="M7.500 3.500V7.500H3.500Z" fill="#777"/></svg>
<div class="abs" style="left:1252px;top:36px;width:1px;height:83px;background:#dcdcdc"></div>
<svg class="abs" style="left:1260px;top:38px" width="15" height="14" viewBox="0 0 15 14" ><path d="M7.800 8.300L2 12.200" stroke="#4a7eb5" stroke-width="2.300" stroke-linecap="butt"/><circle cx="10.400" cy="5.700" r="3.400" fill="#eaf3fb" stroke="#4a7eb5" stroke-width="1.700"/></svg>
<span class="t" id="t47" style="left:1278.8px;top:38.9px;font-size:11.5px;color:#2b2b2b;transform:scaleX(1.0391);">検索</span>
<svg class="abs" style="left:1259px;top:60px" width="18" height="17" viewBox="0 0 18 17" >
<text x=".8" y="7.400" font-family="Liberation Sans,sans-serif" font-size="9.200" font-weight="bold"><tspan fill="#666">a</tspan><tspan fill="#9b59b6">b</tspan></text>
<text x="6.300" y="14.600" font-family="Liberation Sans,sans-serif" font-size="9.200" font-weight="bold"><tspan fill="#666">a</tspan><tspan fill="#4a80bd">c</tspan></text>
<path d="M1.800 9V12.300H4.800M3.400 10.800L5 12.300L3.400 13.800" fill="none" stroke="#4a80bd" stroke-width="1"/></svg>
<span class="t" id="t48" style="left:1278.8px;top:61.9px;font-size:11.5px;color:#2b2b2b;transform:scaleX(1.0391);">置換</span>
<svg class="abs" style="left:1312.8px;top:66.9px" width="5" height="3" viewBox="0 0 5 3"><path d="M0 0H5L2.5 3Z" fill="#666"/></svg>
<svg class="abs" style="left:1263px;top:82px" width="11" height="17" viewBox="0 0 11 17" ><path d="M1.500 1.500V13L4.500 10.300L6.800 15.300L8.600 14.500L6.400 9.600H10Z" fill="#fff" stroke="#666" stroke-width="1" stroke-linejoin="round"/></svg>
<span class="t" id="t49" style="left:1278.8px;top:85.1px;font-size:11.5px;color:#2b2b2b;transform:scaleX(1.0391);">選択</span>
<svg class="abs" style="left:1306.9px;top:89.9px" width="5" height="3" viewBox="0 0 5 3"><path d="M0 0H5L2.5 3Z" fill="#666"/></svg>
<span class="t" id="t50" style="left:1277.4px;top:108.1px;font-size:11.5px;color:#2b2b2b;transform:scaleX(1.0826);">編集</span>
<div class="abs" style="left:1327px;top:36px;width:1px;height:83px;background:#dcdcdc"></div>
<svg class="abs" style="left:1898px;top:112px" width="9" height="7" viewBox="0 0 9 7" ><path d="M.8 5.500L4.500 1.800L8.200 5.500" fill="none" stroke="#666" stroke-width="1.600"/></svg>
<div id="tabbar"></div>
<svg class="abs" style="left:0;top:0" width="1917" height="19" viewBox="0 0 1917 19">
<g fill="none" stroke="#a23e24" stroke-linecap="round" stroke-linejoin="round">
 <g stroke-width="3.4">
  <path d="M1432 17 C1424 11 1424 3 1430 -3"/>
  <path d="M1457 17 C1465 11 1465 3 1459 -3"/>
  <path d="M1437 1 L1451 13 M1437 1 V9 M1437 1 H1445"/>
 </g>
 <g stroke-width="2.6">
  <circle cx="1490.5" cy="1.6" r="2.2"/>
  <path d="M1493 1.6 H1588 L1616 18.3"/>
  <path d="M1528 18.3 L1539 11.9 H1628"/>
  <circle cx="1631.3" cy="11.9" r="3"/>
  <path d="M1635 11.9 H1641 L1654 18.3"/>
 </g>
 <path d="M1651 -1 L1682 18" stroke-width="4"/>
 <path d="M1640 1 L1668 18" stroke-width="2.4" opacity=".7"/>
 <circle cx="1698.5" cy="-12" r="24" stroke-width="5"/>
 <path d="M1788 18 L1808 -1" stroke-width="3"/>
 <path d="M1862 9 L1868 -1 M1878 10 L1886 -1" stroke-width="2.4" opacity=".6"/>
</g></svg>
<div class="abs" style="left:1410px;top:13px;width:500px;height:7px;background:linear-gradient(to bottom,rgba(184,71,43,0),rgba(184,71,43,1))"></div>
<div class="abs" style="left:58px;top:0;width:55px;height:1px;background:#8e3620"></div>
<div class="abs" style="left:58px;top:1px;width:55px;height:30px;background:#f3f3f3"></div>
<div class="abs" style="left:713px;top:0;width:65px;height:31px;background:#9c3b22"></div>
<div class="abs" style="left:782px;top:0;width:53px;height:31px;background:#9f3c22"></div>
<span class="t" id="t7" style="left:7.8px;top:8.2px;font-size:11.5px;color:#fff;transform:scaleX(0.8888);">ファイル</span>
<span class="t" id="t8" style="left:69.5px;top:8.2px;font-size:11.5px;color:#b7472a;transform:scaleX(0.9360);">ホーム</span>
<span class="t" id="t9" style="left:126.5px;top:8.2px;font-size:11.5px;color:#fff;transform:scaleX(1.0435);">挿入</span>
<span class="t" id="t10" style="left:177.5px;top:8.2px;font-size:11.5px;color:#fff;transform:scaleX(1.0739);">描画</span>
<span class="t" id="t11" style="left:228.2px;top:8.2px;font-size:11.5px;color:#fff;transform:scaleX(0.9322);">デザイン</span>
<span class="t" id="t12" style="left:293.3px;top:8.2px;font-size:11.5px;color:#fff;transform:scaleX(1.0033);">画面切り替え</span>
<span class="t" id="t13" style="left:385.5px;top:8.2px;font-size:11.5px;color:#fff;transform:scaleX(0.8612);">アニメーション</span>
<span class="t" id="t14" style="left:473.0px;top:8.2px;font-size:11.5px;color:#fff;transform:scaleX(0.8807);">スライド ショー</span>
<span class="t" id="t15" style="left:564.5px;top:8.2px;font-size:11.5px;color:#fff;transform:scaleX(1.0435);">校閲</span>
<span class="t" id="t16" style="left:615.2px;top:8.2px;font-size:11.5px;color:#fff;transform:scaleX(1.1000);">表示</span>
<span class="t" id="t17" style="left:666.3px;top:8.2px;font-size:11.5px;color:#fff;transform:scaleX(0.9424);">ヘルプ</span>
<span class="t" id="t18" style="left:732.3px;top:8.2px;font-size:11.5px;color:#fff;transform:scaleX(1.1000);">書式</span>
<span class="t" id="t19" style="left:795.3px;top:8.2px;font-size:11.5px;color:#fff;transform:scaleX(1.1087);">書式</span>
<svg class="abs" style="left:848px;top:7px" width="15" height="17" viewBox="0 0 15 17" ><path d="M7.5 1.2a4.6 4.6 0 0 0-2.6 8.4c.5.4.8 1 .8 1.7v.9h3.6v-.9c0-.7.3-1.3.8-1.7A4.6 4.6 0 0 0 7.5 1.2z" fill="none" stroke="#fff" stroke-width="1.1"/><path d="M5.8 13.6h3.4M6.2 15.3h2.6" stroke="#fff" stroke-width="1.1"/></svg>
<span class="t" id="t20" style="left:866.2px;top:8.2px;font-size:11.5px;color:#fff;transform:scaleX(0.9404);">実行したい作業を入力してください</span>
<svg class="abs" style="left:1849px;top:7px" width="17" height="18" viewBox="0 0 17 18" ><circle cx="8" cy="5.900" r="4.400" fill="none" stroke="#fff" stroke-width="1.100"/><path d="M1.300 17C1.600 13.500 3.500 11.300 6.200 10.300" fill="none" stroke="#fff" stroke-width="1.100"/><path d="M12.400 10.200v6.600M9.100 13.500h6.600" stroke="#fff" stroke-width="1.200"/></svg>
<span class="t" id="t21" style="left:1868.9px;top:8.2px;font-size:11.5px;color:#fff;transform:scaleX(1.0391);">共有</span>
</body></html>
